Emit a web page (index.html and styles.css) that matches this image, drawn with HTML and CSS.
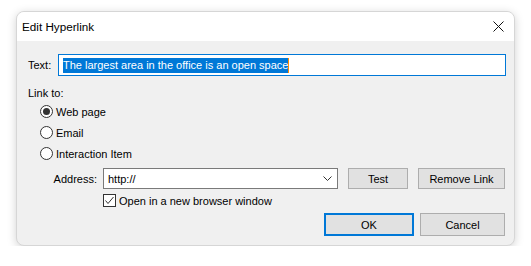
FILE: index.html
```html
<!DOCTYPE html>
<html>
<head>
    <title>Edit Hyperlink</title>
    <link rel="stylesheet" href="styles.css">
</head>
<body>

<div class="dialog">
  <div class="titlebar">
    <span class="title">Edit Hyperlink</span>
    <svg class="close" width="11" height="11" viewBox="0 0 11 11">
      <path d="M0.5 0.5 L10.5 10.5 M10.5 0.5 L0.5 10.5" stroke="#111" stroke-width="1"/>
    </svg>
  </div>

  <div class="content">
    <div class="text-row">
      <span class="label">Text:</span>
      <div class="textbox">
        <span class="selected">The largest area in the office is an open space</span><span class="caret"></span>
      </div>
    </div>

    <div class="linkto">Link to:</div>

    <div class="radios">
      <div class="radio-row"><span class="radio checked"></span>Web page</div>
      <div class="radio-row"><span class="radio"></span>Email</div>
      <div class="radio-row"><span class="radio"></span>Interaction Item</div>
    </div>

    <div class="address-row">
      <span class="addr-label">Address:</span>
      <div class="combo">
        <span>http://</span>
        <svg class="chevron" width="9" height="5" viewBox="0 0 9 5">
          <path d="M0.5 0.5 L4.5 4.5 L8.5 0.5" stroke="#333" fill="none" stroke-width="1"/>
        </svg>
      </div>
      <div class="btn test">Test</div>
      <div class="btn remove">Remove Link</div>
    </div>

    <div class="check-row">
      <span class="checkbox">
        <svg width="11" height="11" viewBox="0 0 11 11">
          <path d="M1.5 5.5 L4 8.5 L9.5 2" stroke="#333" fill="none" stroke-width="1"/>
        </svg>
      </span>
      Open in a new browser window
    </div>

    <div class="button-row">
      <div class="btn ok">OK</div>
      <div class="btn cancel">Cancel</div>
    </div>
  </div>
</div>

</body>
</html>
```

FILE: styles.css
```css
body {
    margin: 0;
    padding: 0;
    background-color: #fff;
    font-family: "Liberation Sans", Arial, sans-serif;
    font-size: 11px;
    color: #000;
}

.dialog {
    margin: 11px 0 0 16px;
    width: 497px;
    height: 233px;
    border: 1px solid #d6d6d6;
    border-radius: 8px;
    overflow: hidden;
    background-color: #f0f0f0;
    box-shadow: 0 2px 10px rgba(0, 0, 0, 0.18);
}

.titlebar {
    height: 29px;
    background-color: #fff;
    display: flex;
    align-items: center;
    justify-content: space-between;
    padding: 0 8px 0 5px;
}

.title {
    font-size: 11.7px;
    margin-top: -1px;
}

.close {
    margin-right: 2px;
}

.content {
    padding: 13px 9px 0 11px;
}

.text-row {
    display: flex;
    align-items: center;
    height: 22px;
    margin-right: -1px; /* input runs 1px past the button column */
}

.label {
    width: 30px;
}

.textbox {
    flex: 1;
    height: 20px;
    border: 1px solid #0078d7;
    background-color: #fff;
    display: flex;
    align-items: center;
    padding-left: 4px;
}

.selected {
    background-color: #0078d7;
    color: #fff;
    line-height: 15px;
}

.caret {
    display: inline-block;
    width: 1px;
    height: 15px;
    background-color: #ff8c00;
}

.linkto {
    margin-top: 9px;
    height: 16px;
    line-height: 16px;
}

.radios {
    padding-left: 12px;
}

.radio-row {
    height: 21px;
    display: flex;
    align-items: center;
}

.radio {
    width: 11px;
    height: 11px;
    border: 1px solid #333;
    border-radius: 50%;
    margin-right: 3px;
    position: relative;
    background-color: #fff;
}

.radio.checked::after {
    content: "";
    position: absolute;
    left: 2px;
    top: 2px;
    width: 7px;
    height: 7px;
    border-radius: 50%;
    background-color: #333;
}

.address-row {
    margin-top: 4px;
    height: 21px;
    display: flex;
    align-items: center;
}

.addr-label {
    width: 69px;
    text-align: right;
    margin-right: 6px;
    flex-shrink: 0;
}

.combo {
    width: 235px;
    height: 21px;
    box-sizing: border-box;
    flex-shrink: 0;
    border: 1px solid #7a7a7a;
    background-color: #fff;
    display: flex;
    align-items: center;
    justify-content: space-between;
    padding: 0 5px 0 4px;
    margin-right: 10px;
}

.combo span {
    flex: 1;
}

.btn {
    box-sizing: border-box;
    flex-shrink: 0;
    background-color: #e1e1e1;
    border: 1px solid #adadad;
    display: flex;
    align-items: center;
    justify-content: center;
}

.test {
    width: 60px;
    height: 21px;
    margin-right: 10px;
}

.remove {
    width: 87px;
    height: 21px;
}

.check-row {
    margin: 4px 0 0 75px;
    height: 15px;
    display: flex;
    align-items: center;
}

.checkbox {
    width: 13px;
    height: 13px;
    box-sizing: border-box;
    border: 1px solid #333;
    background-color: #fff;
    display: flex;
    align-items: center;
    justify-content: center;
    margin-right: 3px;
}

.button-row {
    margin-top: 5px;
    display: flex;
    justify-content: flex-end;
}

.ok {
    width: 90px;
    height: 23px;
    border: 2px solid #0078d7;
    margin-right: 6px;
}

.cancel {
    width: 85px;
    height: 23px;
}
```
